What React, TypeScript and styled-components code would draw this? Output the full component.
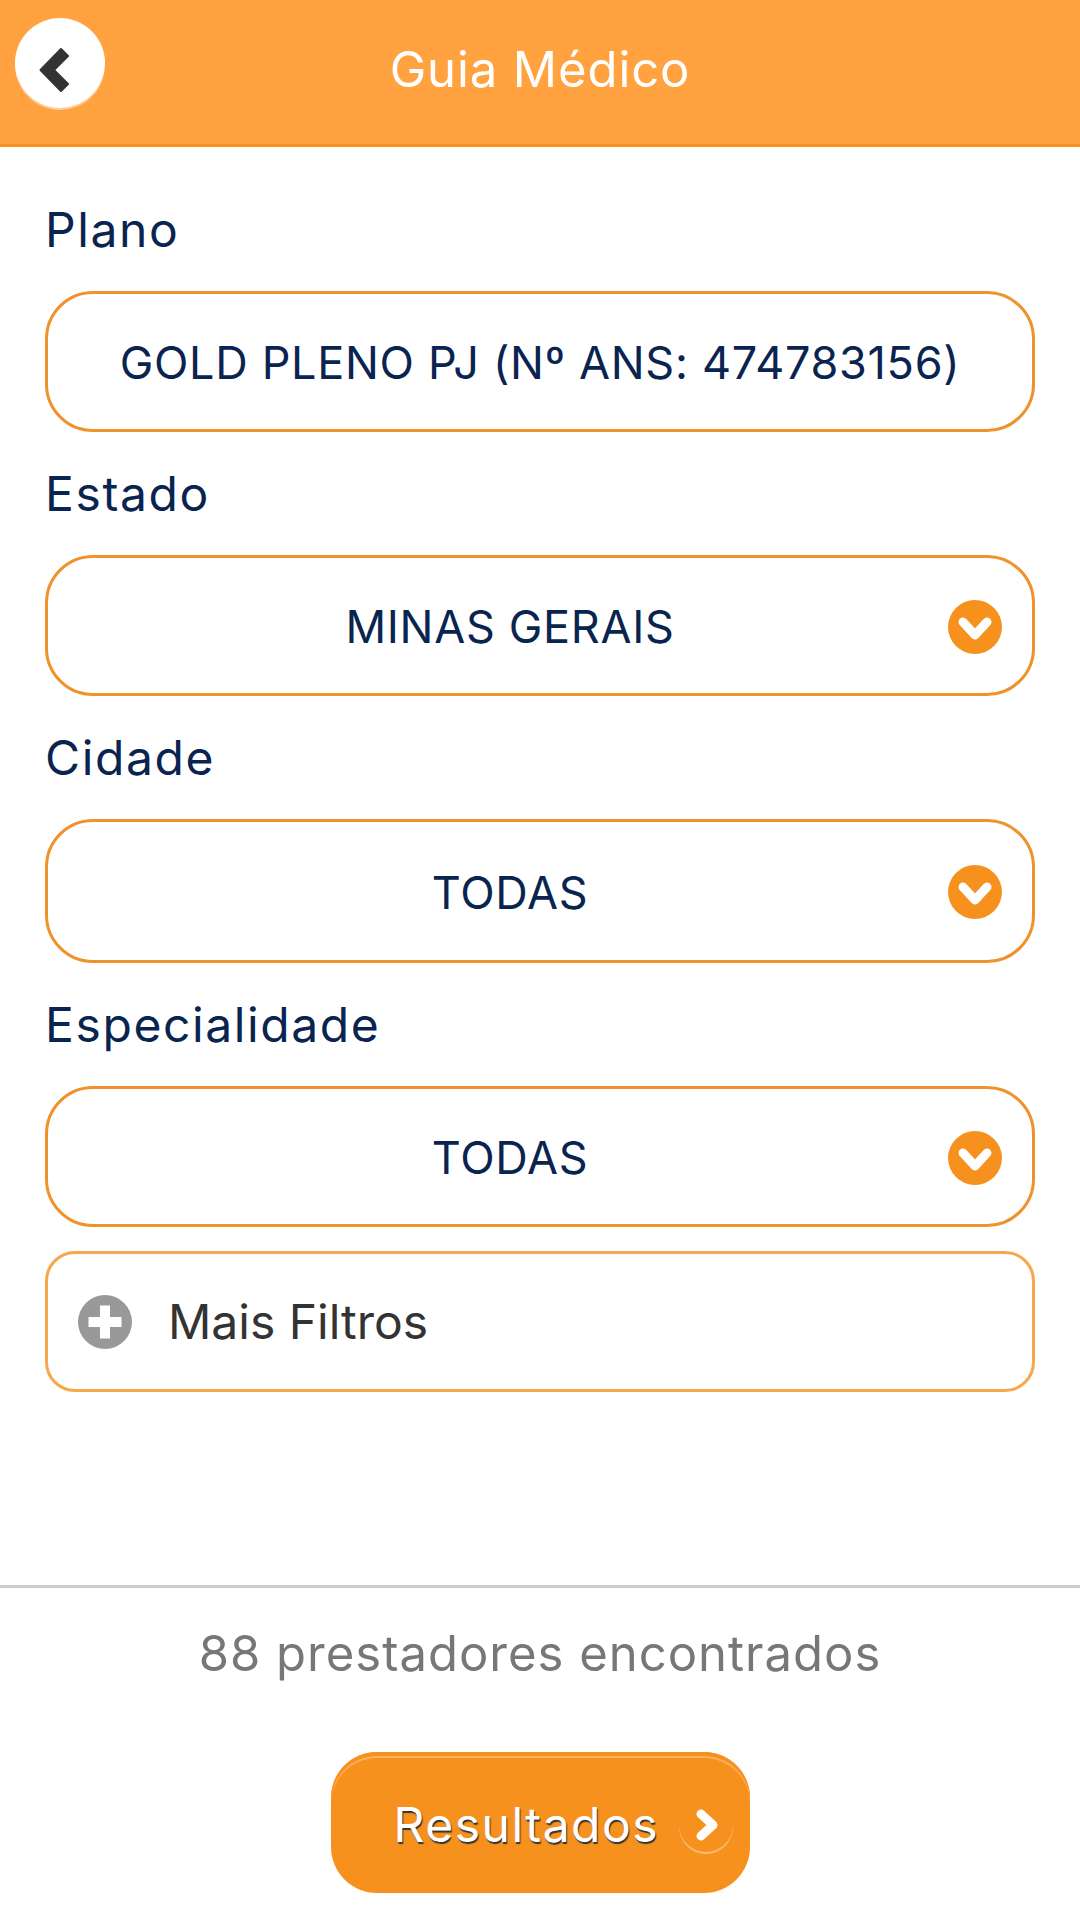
import styled, { createGlobalStyle } from "styled-components";

const GlobalStyle = createGlobalStyle`
  html, body {
    margin: 0;
    padding: 0;
    background: #fff;
  }
  * {
    box-sizing: border-box;
  }
`;

const Page = styled.div`
  display: flex;
  flex-direction: column;
  width: 1080px;
  height: 1920px;
  font-family: Inter, "Liberation Sans", sans-serif;
  overflow: hidden;
`;

const Header = styled.header`
  position: relative;
  display: flex;
  align-items: center;
  justify-content: center;
  height: 147px;
  padding-bottom: 6px;
  background: #ffa23f;
  border-bottom: 3px solid #f6911e;
`;

const BackButton = styled.button`
  position: absolute;
  left: 15px;
  top: 18px;
  display: flex;
  align-items: center;
  justify-content: center;
  width: 90px;
  height: 90px;
  padding: 0;
  border: none;
  border-radius: 50%;
  background: #fff;
  box-shadow: 0 2px 0 rgba(255, 255, 255, 0.45);
`;

const BackGlyph = styled.svg`
  width: 40px;
  height: 48px;
  margin: 14px 12px 0 0;
`;

const Title = styled.h1`
  margin: 0;
  font-size: 49px;
  font-weight: 400;
  letter-spacing: 0.9px;
  color: #fff;
`;

const Form = styled.main`
  display: flex;
  flex-direction: column;
  padding: 21px 45px 0;
`;

const Field = styled.div`
  display: flex;
  flex-direction: column;
`;

const Label = styled.label`
  display: flex;
  align-items: center;
  height: 123px;
  font-size: 48px;
  font-weight: 400;
  letter-spacing: 1.6px;
  color: #0a2450;
`;

const Select = styled.div<{ $arrow?: boolean; $tall?: boolean }>`
  position: relative;
  display: flex;
  align-items: center;
  justify-content: center;
  height: ${({ $tall }) => ($tall ? "144px" : "141px")};
  padding-top: 2px;
  padding-right: ${({ $arrow }) => ($arrow ? "60px" : "0")};
  background: #fff;
  border: 3px solid #f0922b;
  border-radius: 48px;
  font-size: 45px;
  letter-spacing: 0.7px;
  color: #0a2450;
`;

const ArrowSlot = styled.span`
  position: absolute;
  right: 30px;
  top: calc(50% + 1px);
  display: flex;
  transform: translateY(-50%);
`;

const MoreFilters = styled.div`
  display: flex;
  align-items: center;
  gap: 36px;
  height: 141px;
  margin-top: 24px;
  padding-left: 30px;
  border: 3px solid #f8a84b;
  border-radius: 30px;
  font-size: 48px;
  color: #333;
`;

const Footer = styled.footer`
  display: flex;
  flex-direction: column;
  align-items: center;
  margin-top: auto;
  height: 335px;
  border-top: 3px solid #ccc;
`;

const Count = styled.p`
  margin: 0;
  height: 164px;
  padding-top: 33px;
  font-size: 49px;
  letter-spacing: 1px;
  line-height: 66px;
  color: #777;
`;

const ResultButton = styled.button`
  display: flex;
  align-items: center;
  gap: 20px;
  width: 419px;
  height: 141px;
  padding: 4px 0 0 63px;
  border: none;
  border-radius: 46px;
  background: #f6911e;
  box-shadow: inset 0 4px 0 #f6911e, inset 0 6px 0 #fbb260;
  font-family: inherit;
  font-size: 48px;
  letter-spacing: 1.5px;
  color: #fff;
  text-shadow: 1px 2px 1px #333;
`;

const ResultArrow = styled.span`
  display: flex;
  margin-top: 4px;
  border-radius: 50%;
  box-shadow: inset 0 -2px 0 rgba(255, 255, 255, 0.4);
`;

const BackIcon = () => (
  <BackGlyph viewBox="0 0 40 48">
    <polygon
      points="27,3 34,10 20,24 34,38 27,45 6.5,24"
      fill="#333"
      stroke="#333"
      strokeWidth="2"
      strokeLinejoin="round"
    />
  </BackGlyph>
);

const DownIcon = () => (
  <svg width="54" height="54" viewBox="0 0 54 54">
    <circle cx="27" cy="27" r="27" fill="#f6911e" />
    <path d="M15 22 L27 35 L39 22" fill="none" stroke="#fff" strokeWidth="9" strokeLinecap="round" strokeLinejoin="round" />
  </svg>
);

const PlusIcon = () => (
  <svg width="54" height="54" viewBox="0 0 54 54">
    <circle cx="27" cy="27" r="27" fill="#999" />
    <path d="M27 10.5 V43.5 M10.5 27 H43.5" fill="none" stroke="#fff" strokeWidth="10" />
  </svg>
);

const RightIcon = () => (
  <svg width="54" height="54" viewBox="0 0 54 54">
    <path d="M22 14 L34 25 L22 36" fill="none" stroke="#fff" strokeWidth="9" strokeLinecap="round" strokeLinejoin="round" />
  </svg>
);

const fields = [
  { label: "Plano", value: "GOLD PLENO PJ (Nº ANS: 474783156)", arrow: false, tall: false },
  { label: "Estado", value: "MINAS GERAIS", arrow: true, tall: false },
  { label: "Cidade", value: "TODAS", arrow: true, tall: true },
  { label: "Especialidade", value: "TODAS", arrow: true, tall: false },
];

const App = () => (
  <Page>
    <GlobalStyle />
    <Header>
      <BackButton>
        <BackIcon />
      </BackButton>
      <Title>Guia Médico</Title>
    </Header>
    <Form>
      {fields.map((field) => (
        <Field key={field.label}>
          <Label>{field.label}</Label>
          <Select $arrow={field.arrow} $tall={field.tall}>
            {field.value}
            {field.arrow && (
              <ArrowSlot>
                <DownIcon />
              </ArrowSlot>
            )}
          </Select>
        </Field>
      ))}
      <MoreFilters>
        <PlusIcon />
        Mais Filtros
      </MoreFilters>
    </Form>
    <Footer>
      <Count>88 prestadores encontrados</Count>
      <ResultButton>
        Resultados
        <ResultArrow>
          <RightIcon />
        </ResultArrow>
      </ResultButton>
    </Footer>
  </Page>
);

export default App;
